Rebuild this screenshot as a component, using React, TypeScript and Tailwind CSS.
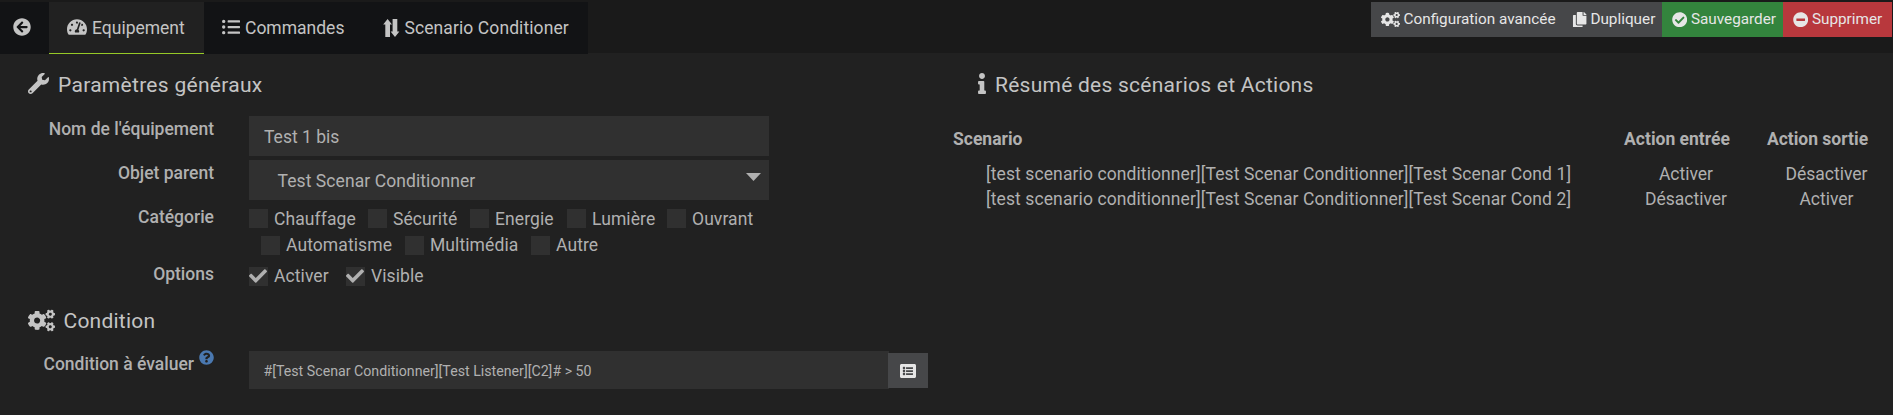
import { type ReactNode } from "react";
import {
  FaArrowCircleLeft,
  FaTachometerAlt,
  FaListUl,
  FaWrench,
  FaCogs,
  FaInfo,
  FaQuestionCircle,
  FaListAlt,
  FaCopy,
  FaCheckCircle,
  FaMinusCircle,
  FaCheck,
} from "react-icons/fa";

function Check({ label, checked = false, className }: { label: string; checked?: boolean; className: string }) {
  return (
    <label className={`flex shrink-0 items-start tracking-[0.09px] ${className}`}>
      <span className="flex size-[18.5px] shrink-0 items-center justify-center bg-[#303030]">
        {checked && <FaCheck className="size-[18px]" />}
      </span>
      <span className="ml-[6.5px] h-[20px]">{label}</span>
    </label>
  );
}

function Label({ children, className }: { children: ReactNode; className: string }) {
  return <div className={`flex w-[214px] shrink-0 justify-end font-medium leading-[20px] ${className}`}>{children}</div>;
}

function UpDownArrows() {
  return (
    <svg className="h-[18px] w-[17px]" viewBox="0 0 17 18" fill="currentColor">
      <path d="M4.6 0L9 5.4H7V18H2.3V5.4H0.2Z" />
      <path d="M12 18L7.6 12.6H9.6V0H14.3V12.6H16.4Z" />
    </svg>
  );
}

const rows = [
  ["[test scenario conditionner][Test Scenar Conditionner][Test Scenar Cond 1]", "Activer", "Désactiver"],
  ["[test scenario conditionner][Test Scenar Conditionner][Test Scenar Cond 2]", "Désactiver", "Activer"],
];

export default function App() {
  return (
    <div className="flex h-[415px] w-[1893px] flex-col overflow-hidden bg-[#212121] font-['Roboto',sans-serif] text-[17.5px] text-[#b0b0b0]">
      <header className="flex h-[53px] shrink-0 justify-between bg-[#1a1a1a] pt-[2px]">
        <nav className="flex h-[52px] w-[588px] bg-[#121315] text-[#c4c4c4]">
          <a className="flex w-[49px] items-center pl-[13px]">
            <FaArrowCircleLeft className="mb-[2px] size-[18px]" />
          </a>
          <a className="flex w-[155px] items-center border-b border-[#96c927] bg-[#212121] pl-[18px] pt-px">
            <FaTachometerAlt className="mb-[2px] size-[20px]" />
            <span className="ml-[5px]">Equipement</span>
          </a>
          <a className="flex w-[161px] items-center pl-[18px]">
            <FaListUl className="mb-[2px] size-[18px]" />
            <span className="ml-[5px]">Commandes</span>
          </a>
          <a className="flex flex-1 items-center pl-[17.5px]">
            <UpDownArrows />
            <span className="ml-[5px] tracking-[0.09px]">Scenario Conditioner</span>
          </a>
        </nav>
        <div className="mr-[1px] flex h-[35px] w-[521px] text-[15.3px] text-[#e6e6e6]">
          <button className="flex w-[192px] items-center bg-[#464749] pl-[10px]">
            <FaCogs className="size-[19px]" />
            <span className="ml-[3.5px]">Configuration avancée</span>
          </button>
          <button className="flex w-[99px] items-center bg-[#464749] pl-[9px]">
            <FaCopy className="size-[15.4px]" />
            <span className="ml-[3px]">Dupliquer</span>
          </button>
          <button className="flex w-[121px] items-center bg-[#33843d] pl-[10px]">
            <FaCheckCircle className="size-[15.4px]" />
            <span className="ml-[3.5px]">Sauvegarder</span>
          </button>
          <button className="flex flex-1 items-center bg-[#b8383d] pl-[10px]">
            <FaMinusCircle className="size-[15.4px]" />
            <span className="ml-[3.5px]">Supprimer</span>
          </button>
        </div>
      </header>

      <main className="flex flex-1">
        <section className="flex w-[946px] shrink-0 flex-col">
          <h2 className="flex h-[63px] items-start pl-[28px] pt-[20px] text-[21px] leading-[24px] tracking-[0.29px] text-[#c4c4c4]">
            <FaWrench className="size-[21px]" />
            <span className="ml-[9px]">Paramètres généraux</span>
          </h2>
          <div className="flex h-[44px]">
            <Label className="pt-[3px]">Nom de l'équipement</Label>
            <div className="ml-[35px] h-[40px] w-[520px] bg-[#303030] pl-[15px] leading-[42px]">Test 1 bis</div>
          </div>
          <div className="flex h-[44px]">
            <Label className="pt-[3px]">Objet parent</Label>
            <div className="ml-[35px] flex h-[40px] w-[520px] justify-between bg-[#303030] pl-[28.5px] pr-[8px]">
              <span className="leading-[42px] tracking-[0.08px]">Test Scenar Conditionner</span>
              <svg className="mt-[13px] h-[8px] w-[15px]" viewBox="0 0 15 8" fill="currentColor">
                <path d="M0 0H15L7.5 8Z" />
              </svg>
            </div>
          </div>
          <div className="flex h-[57px]">
            <Label className="pt-[3px]">Catégorie</Label>
            <div className="ml-[35px] pt-[5px]">
              <div className="flex h-[27px] leading-[20px]">
                <Check className="w-[119px]" label="Chauffage" />
                <Check className="w-[102px]" label="Sécurité" />
                <Check className="w-[97px]" label="Energie" />
                <Check className="w-[100px]" label="Lumière" />
                <Check className="w-[100px]" label="Ouvrant" />
              </div>
              <div className="flex pl-[12px] leading-[19px]">
                <Check className="w-[144px]" label="Automatisme" />
                <Check className="w-[126px]" label="Multimédia" />
                <Check className="w-[100px]" label="Autre" />
              </div>
            </div>
          </div>
          <div className="flex h-[40px]">
            <Label className="pt-[3px]">Options</Label>
            <div className="ml-[35px] flex pt-[6px] leading-[19px]">
              <Check className="w-[97px]" label="Activer" checked />
              <Check className="w-[97px]" label="Visible" checked />
            </div>
          </div>
          <h2 className="flex h-[50px] items-start pl-[28px] pt-[8px] text-[21px] leading-[24px] tracking-[0.22px] text-[#c4c4c4]">
            <FaCogs className="-mt-[2px] size-[27px]" />
            <span className="ml-[8.5px]">Condition</span>
          </h2>
          <div className="flex">
            <Label className="pt-[3px]">
              Condition à évaluer
              <FaQuestionCircle className="-mt-[4px] ml-[5px] size-[15px] text-[#4a78b0]" />
            </Label>
            <div className="ml-[35px] h-[38px] w-[640px] bg-[#303030] pl-[14.5px] text-[14.2px] leading-[40px]">
              #[Test Scenar Conditionner][Test Listener][C2]# &gt; 50
            </div>
            <button className="-ml-px mt-[2px] flex h-[35px] w-[40px] items-center justify-center bg-[#464749] text-[#e6e6e6]">
              <FaListAlt className="size-[16px]" />
            </button>
          </div>
        </section>

        <section className="flex-1">
          <h2 className="flex h-[76px] items-start pl-[32px] pt-[20px] text-[21px] leading-[24px] tracking-[0.25px] text-[#c4c4c4]">
            <FaInfo className="h-[21px] w-[8px]" />
            <span className="ml-[9px]">Résumé des scénarios et Actions</span>
          </h2>
          <div className="flex h-[35px] pl-[7px] font-bold leading-[20px]">
            <span className="w-[652.5px]">Scenario</span>
            <span className="w-[143px] text-center">Action entrée</span>
            <span className="w-[138px] text-center">Action sortie</span>
          </div>
          {rows.map(([name, enter, exit]) => (
            <div key={name} className="flex h-[25px] pl-[40px] leading-[20px]">
              <span className="w-[628.5px] tracking-[0.1px]">{name}</span>
              <span className="w-[143px] text-center">{enter}</span>
              <span className="w-[138px] text-center">{exit}</span>
            </div>
          ))}
        </section>
      </main>
    </div>
  );
}
